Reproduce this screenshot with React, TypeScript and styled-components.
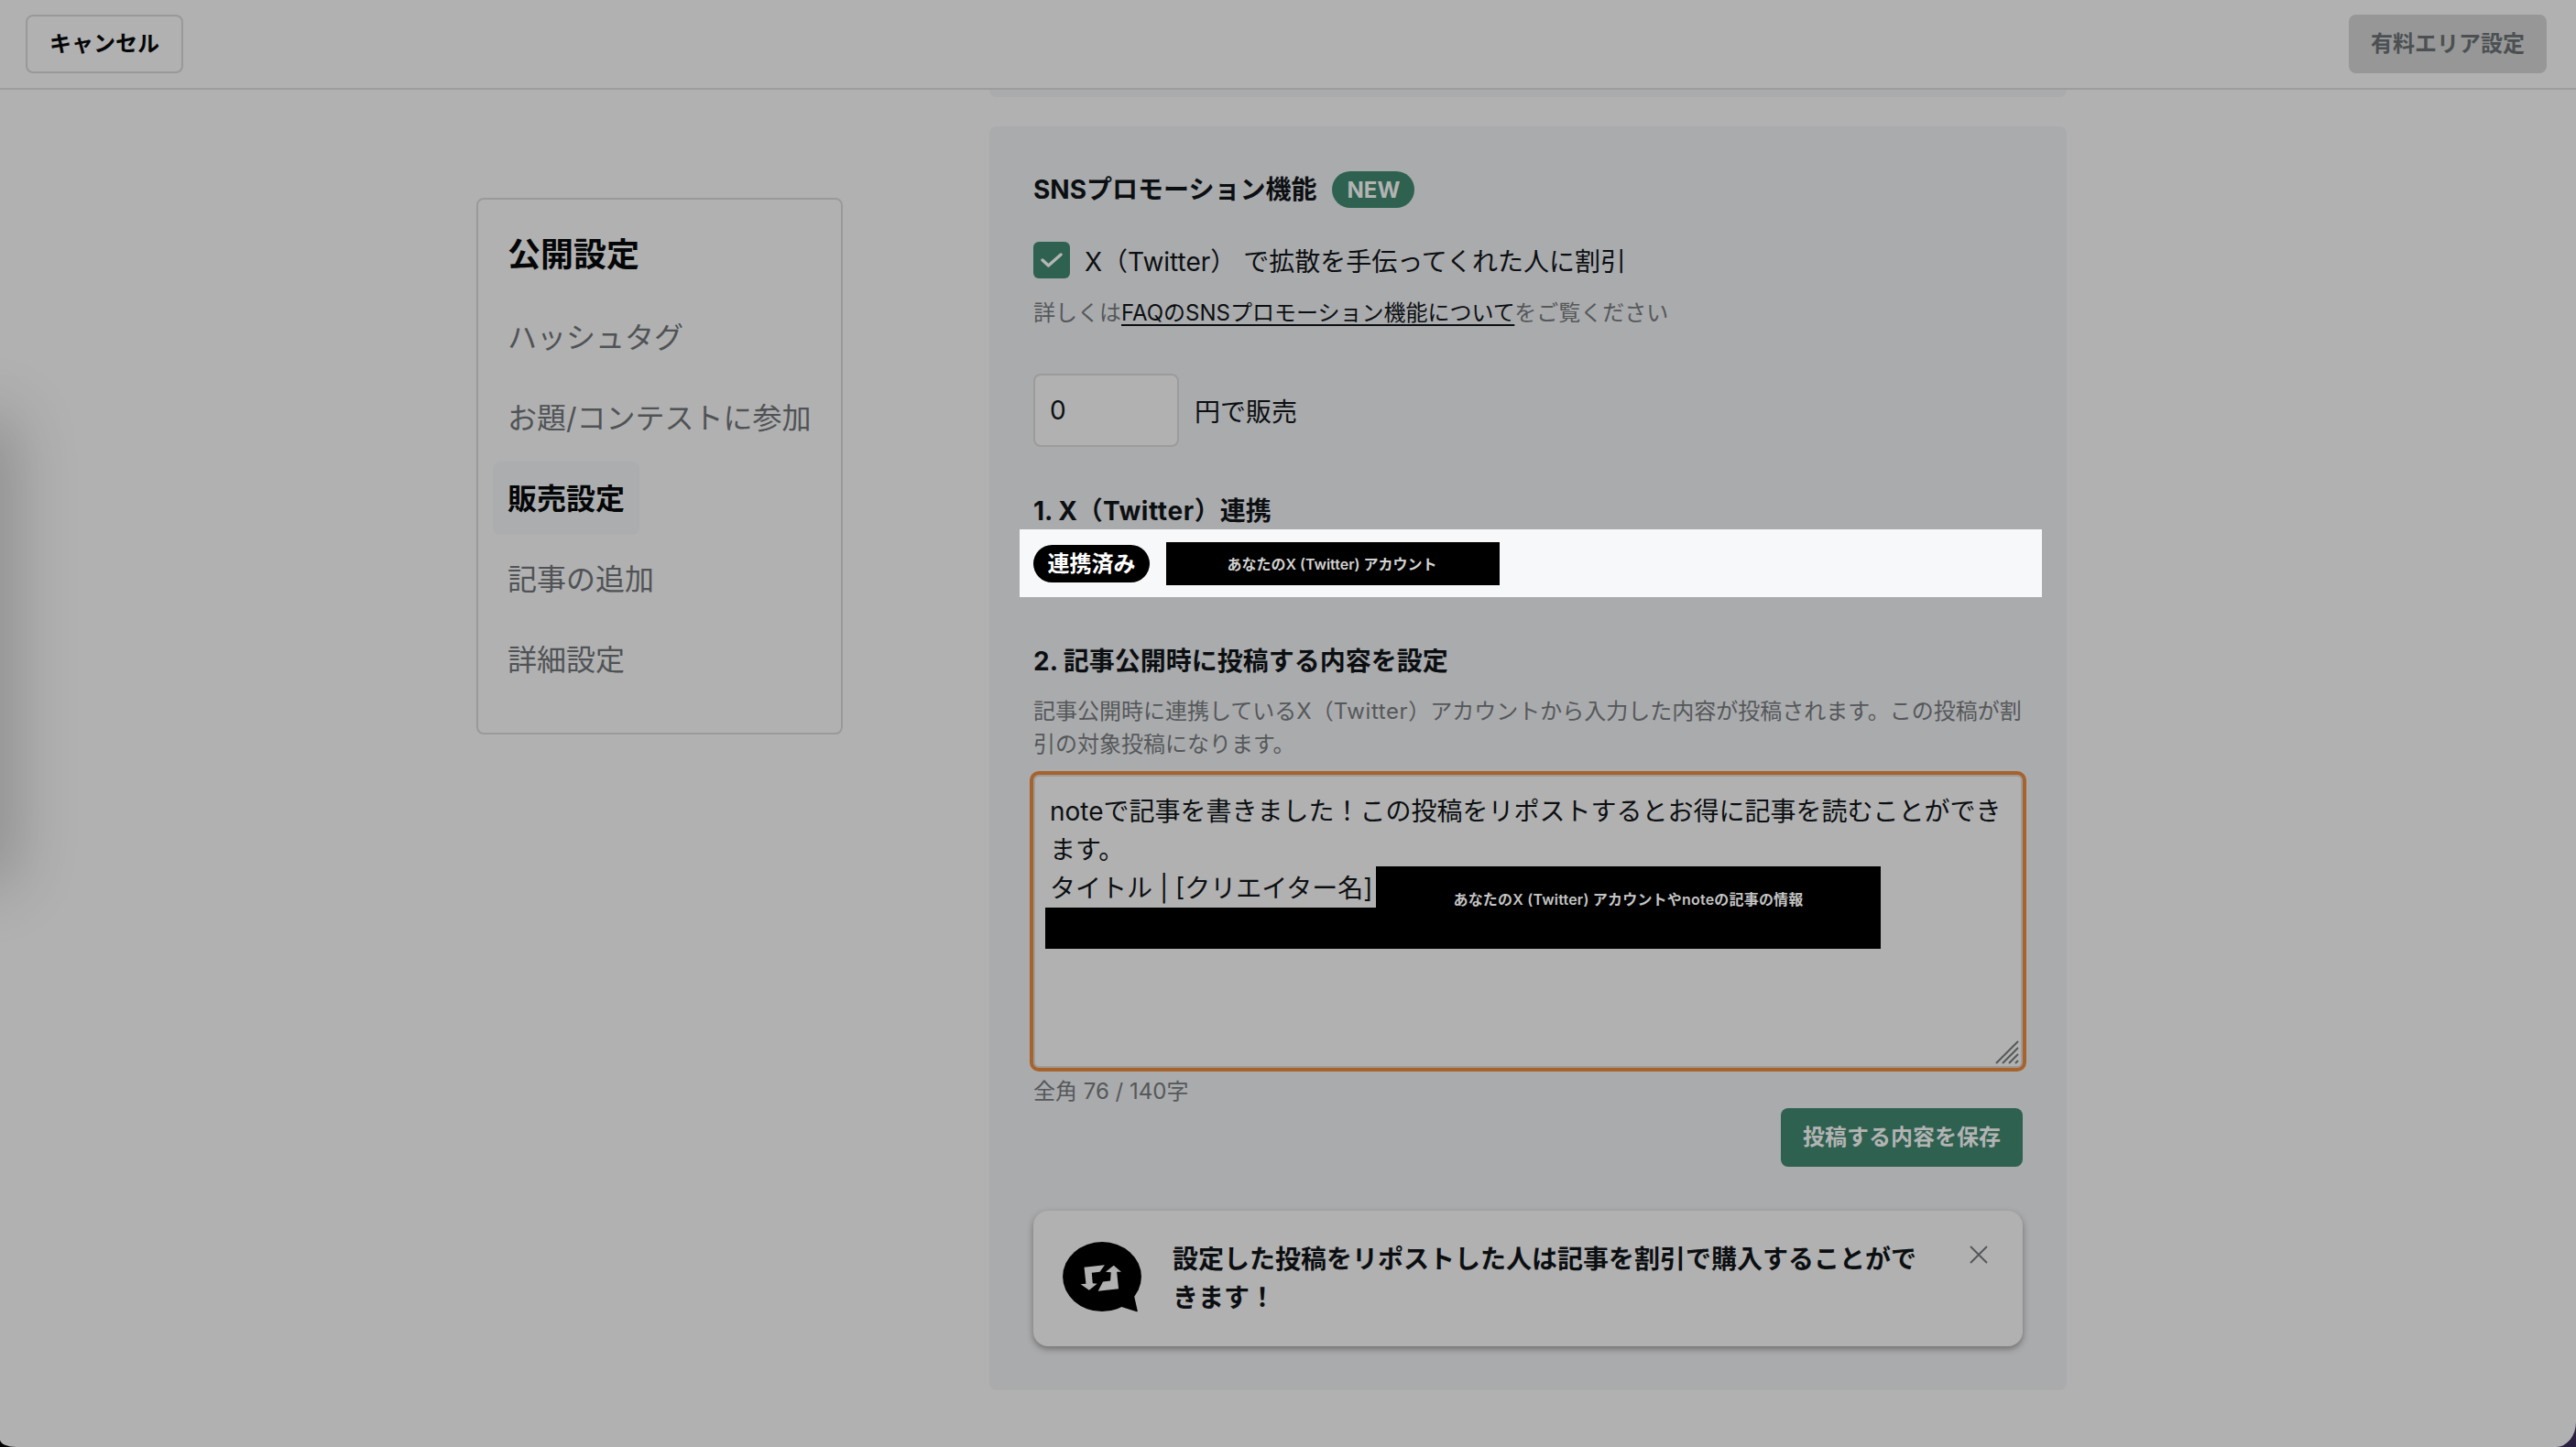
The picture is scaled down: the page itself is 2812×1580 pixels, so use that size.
import React from "react";
import styled, { createGlobalStyle } from "styled-components";

const Global = createGlobalStyle`
  html, body { margin: 0; padding: 0; background: linear-gradient(90deg, #000 0 50%, #2a2040 100%); }
  body { width: 2812px; height: 1580px; overflow: hidden; font-family: Inter, "Noto Sans CJK JP", sans-serif; color: #0c0f12; }
  * { box-sizing: border-box; }
`;

const Page = styled.div`
  position: relative;
  width: 2812px;
  height: 1580px;
  overflow: hidden;
  background: #b1b1b1;
  border-bottom-left-radius: 18px 8px;
  border-bottom-right-radius: 22px 27px;
`;

const SideShade = styled.div`
  position: absolute;
  left: -40px;
  top: 470px;
  width: 40px;
  height: 480px;
  box-shadow: 0 0 70px 14px rgba(0, 0, 0, 0.22);
  pointer-events: none;
`;

const Header = styled.header`
  display: flex;
  justify-content: space-between;
  align-items: center;
  height: 98px;
  padding: 0 32px 0 28px;
  border-bottom: 2px solid #9d9d9d;
`;

const CancelButton = styled.button`
  width: 172px;
  height: 64px;
  padding: 0;
  border: 2px solid #999;
  border-radius: 8px;
  background: transparent;
  color: #050607;
  font: 700 24px/1 Inter, "Noto Sans CJK JP", sans-serif;
`;

const PaidButton = styled.button`
  width: 216px;
  height: 64px;
  padding: 0;
  border: 0;
  border-radius: 8px;
  background: #979797;
  color: #4c5052;
  font: 700 24px/1 Inter, "Noto Sans CJK JP", sans-serif;
`;

const Body = styled.div`
  display: flex;
  align-items: flex-start;
  padding-left: 520px;
`;

const Sidebar = styled.nav`
  display: flex;
  flex-direction: column;
  gap: 8px;
  width: 400px;
  height: 586px;
  margin-top: 118px;
  padding: 22px 16px 0;
  border: 2px solid #9a9a9a;
  border-radius: 8px;
`;

const NavTitle = styled.div`
  display: flex;
  align-items: center;
  height: 80px;
  padding: 0 16px 10px;
  font-size: 36px;
  font-weight: 700;
  color: #050607;
`;

const NavItem = styled.a<{ $active?: boolean }>`
  display: flex;
  align-items: center;
  width: fit-content;
  height: 80px;
  padding: 0 16px 5px;
  border-radius: 8px;
  font-size: 32px;
  white-space: nowrap;
  font-weight: ${(p) => (p.$active ? 700 : 400)};
  color: ${(p) => (p.$active ? "#050607" : "#505356")};
  background: ${(p) => (p.$active ? "#abadaf" : "transparent")};
`;

const Main = styled.main`
  width: 1176px;
  margin-left: 160px;
`;

const PanelStub = styled.div`
  height: 8px;
  margin-bottom: 32px;
  background: #aaabad;
  border-radius: 0 0 8px 8px;
`;

const Panel = styled.section`
  height: 1380px;
  padding: 49px 48px 48px;
  background: #aaabad;
  border-radius: 8px;
`;

const TitleRow = styled.div`
  display: flex;
  align-items: center;
  gap: 17px;
  height: 40px;
`;

const Title = styled.h2`
  margin: 0;
  font-size: 28px;
  line-height: 40px;
  font-weight: 700;
`;

const NewBadge = styled.span`
  display: inline-flex;
  align-items: center;
  justify-content: center;
  width: 90px;
  height: 40px;
  border-radius: 20px;
  background: #2e6150;
  color: #b3b3b3;
  font-size: 24px;
  font-weight: 700;
`;

const CheckRow = styled.label`
  display: flex;
  align-items: center;
  gap: 16px;
  height: 40px;
  margin-top: 37px;
  font-size: 28px;
`;

const CheckBox = styled.span`
  display: flex;
  align-items: center;
  justify-content: center;
  width: 40px;
  height: 40px;
  border-radius: 6px;
  background: #2e6150;
`;

const Help = styled.p`
  margin: 20px 0 0;
  font-size: 24px;
  line-height: 36px;
  color: #55585a;
`;

const HelpLink = styled.a`
  color: #0c0f12;
  text-decoration: underline;
  text-underline-offset: 4px;
`;

const PriceRow = styled.div`
  display: flex;
  align-items: center;
  gap: 17px;
  margin-top: 48px;
  font-size: 28px;
`;

const PriceInput = styled.div`
  display: flex;
  align-items: center;
  width: 159px;
  height: 80px;
  padding-left: 16px;
  border: 2px solid #9b9b9b;
  border-radius: 8px;
  background: #b1b1b1;
`;

const StepHeading = styled.h3`
  margin: 50px 0 0;
  font-size: 28px;
  line-height: 40px;
  font-weight: 700;
`;

const WideLatin = styled.span`
  letter-spacing: 0.6px;
`;

const LinkedBand = styled.div`
  display: flex;
  align-items: center;
  width: 1116px;
  height: 74px;
  margin-left: -15px;
  padding-left: 15px;
  background: #f7f8fa;
`;

const LinkedPill = styled.span`
  display: flex;
  align-items: center;
  justify-content: center;
  width: 127px;
  height: 41px;
  padding-bottom: 3px;
  border-radius: 21px;
  background: #000;
  color: #fff;
  font-size: 24px;
  font-weight: 700;
`;

const AccountMask = styled.span`
  display: flex;
  align-items: center;
  justify-content: center;
  width: 364px;
  height: 47px;
  margin-left: 18px;
  padding-right: 2px;
  background: #000;
  color: #d2d2d2;
  font-size: 16px;
  font-weight: 600;
`;

const Description = styled.p`
  margin: 17px 0 0;
  width: 1080px;
  font-size: 24px;
  line-height: 36px;
  color: #55585a;
`;

const Editor = styled.div`
  position: relative;
  width: 1080px;
  height: 320px;
  margin-top: 15px;
  padding: 17px 16px;
  border: 2px solid #9b9b9b;
  border-radius: 6px;
  outline: 4px solid #a8622b;
  background: #b1b1b1;
  font-size: 28px;
  line-height: 42px;
`;

const EditorLine = styled.div`
  white-space: normal;
`;

const MaskWide = styled.div`
  position: absolute;
  left: 372px;
  top: 98px;
  display: flex;
  justify-content: center;
  width: 551px;
  height: 90px;
  padding: 25px 0 0 0;
  background: #000;
  color: #c4c4c4;
  font-size: 16px;
  line-height: 22px;
  font-weight: 600;
  letter-spacing: 0.2px;
`;

const MaskLow = styled.div`
  position: absolute;
  left: 11px;
  top: 143px;
  width: 418px;
  height: 45px;
  background: #000;
`;

const ResizeGrip = styled.svg`
  position: absolute;
  right: 2px;
  bottom: 2px;
`;

const Counter = styled.div`
  margin-top: 8px;
  font-size: 24px;
  line-height: 36px;
  color: #55585a;
`;

const SaveRow = styled.div`
  display: flex;
  justify-content: flex-end;
`;

const SaveButton = styled.button`
  width: 264px;
  height: 64px;
  padding: 0;
  border: 0;
  border-radius: 8px;
  background: #2e6150;
  color: #b3b3b3;
  font: 700 24px/1 Inter, "Noto Sans CJK JP", sans-serif;
`;

const NoticeCard = styled.aside`
  position: relative;
  display: flex;
  align-items: center;
  gap: 32px;
  width: 1080px;
  height: 148px;
  margin-top: 48px;
  padding: 0 112px 0 32px;
  border-radius: 16px;
  background: #b1b1b1;
  box-shadow: 0 3px 7px rgba(0, 0, 0, 0.35);
`;

const NoticeIcon = styled.svg`
  flex: none;
`;

const NoticeText = styled.p`
  margin: 0;
  width: 816px;
  font-size: 28px;
  line-height: 42px;
  font-weight: 700;
`;

const CloseIcon = styled.svg`
  position: absolute;
  right: 38px;
  top: 38px;
`;

export default function App() {
  return (
    <>
      <Global />
      <Page>
        <SideShade />
        <Header>
          <CancelButton>キャンセル</CancelButton>
          <PaidButton>有料エリア設定</PaidButton>
        </Header>
        <Body>
          <Sidebar>
            <NavTitle>公開設定</NavTitle>
            <NavItem>ハッシュタグ</NavItem>
            <NavItem>お題/コンテストに参加</NavItem>
            <NavItem $active>販売設定</NavItem>
            <NavItem>記事の追加</NavItem>
            <NavItem>詳細設定</NavItem>
          </Sidebar>
          <Main>
            <PanelStub />
            <Panel>
              <TitleRow>
                <Title>SNSプロモーション機能</Title>
                <NewBadge>NEW</NewBadge>
              </TitleRow>
              <CheckRow>
                <CheckBox>
                  <svg width="24" height="16" viewBox="0 0 24 16">
                    <path d="M2 8l6.5 6L22 2" fill="none" stroke="#b5b5b5" strokeWidth="3.4" strokeLinecap="round" strokeLinejoin="round" />
                  </svg>
                </CheckBox>
                <span>X（Twitter） で拡散を手伝ってくれた人に割引</span>
              </CheckRow>
              <Help>
                詳しくは<HelpLink>FAQのSNSプロモーション機能について</HelpLink>をご覧ください
              </Help>
              <PriceRow>
                <PriceInput>0</PriceInput>
                <span>円で販売</span>
              </PriceRow>
              <StepHeading>
                1. X（<WideLatin>Twitter</WideLatin>）連携
              </StepHeading>
              <LinkedBand>
                <LinkedPill>連携済み</LinkedPill>
                <AccountMask>あなたのX (Twitter) アカウント</AccountMask>
              </LinkedBand>
              <StepHeading>2. 記事公開時に投稿する内容を設定</StepHeading>
              <Description>
                記事公開時に連携しているX（<WideLatin>Twitter</WideLatin>）アカウントから入力した内容が投稿されます。この投稿が割引の対象投稿になります。
              </Description>
              <Editor>
                <EditorLine>noteで記事を書きました！この投稿をリポストするとお得に記事を読むことができます。</EditorLine>
                <EditorLine>タイトル | [クリエイター名]</EditorLine>
                <MaskLow />
                <MaskWide>あなたのX (Twitter) アカウントやnoteの記事の情報</MaskWide>
                <ResizeGrip width="26" height="26" viewBox="0 0 26 26">
                  <path d="M1 25L25 1M8 25L25 8M15 25L25 15M22 25l3-3" stroke="#55585a" strokeWidth="2" fill="none" />
                </ResizeGrip>
              </Editor>
              <Counter>全角 76 / 140字</Counter>
              <SaveRow>
                <SaveButton>投稿する内容を保存</SaveButton>
              </SaveRow>
              <NoticeCard>
                <NoticeIcon width="88" height="80" viewBox="0 0 90 82">
                  <ellipse cx="44" cy="39" rx="44" ry="39" fill="#000" />
                  <path d="M79 60L83 77.500L66 72Z" fill="#000" stroke="#000" strokeWidth="1.500" strokeLinejoin="round" />
                  <path d="M24 28.500L47 26L41.500 33.500L32.500 34.500L33.500 46.500L38.500 47L29.500 54L20 47.500L26 47Z" fill="#b1b1b1" />
                  <path d="M65.500 33.500L57 26.500L48 33.500L54 34L53.300 43.500L45 44.500L39.500 55L62.500 52.500L60.500 33.500Z" fill="#b1b1b1" />
                </NoticeIcon>
                <NoticeText>設定した投稿をリポストした人は記事を割引で購入することができます！</NoticeText>
                <CloseIcon width="20" height="20" viewBox="0 0 20 20">
                  <path d="M1 1l18 18M19 1L1 19" stroke="#55585a" strokeWidth="2" fill="none" />
                </CloseIcon>
              </NoticeCard>
            </Panel>
          </Main>
        </Body>
      </Page>
    </>
  );
}
